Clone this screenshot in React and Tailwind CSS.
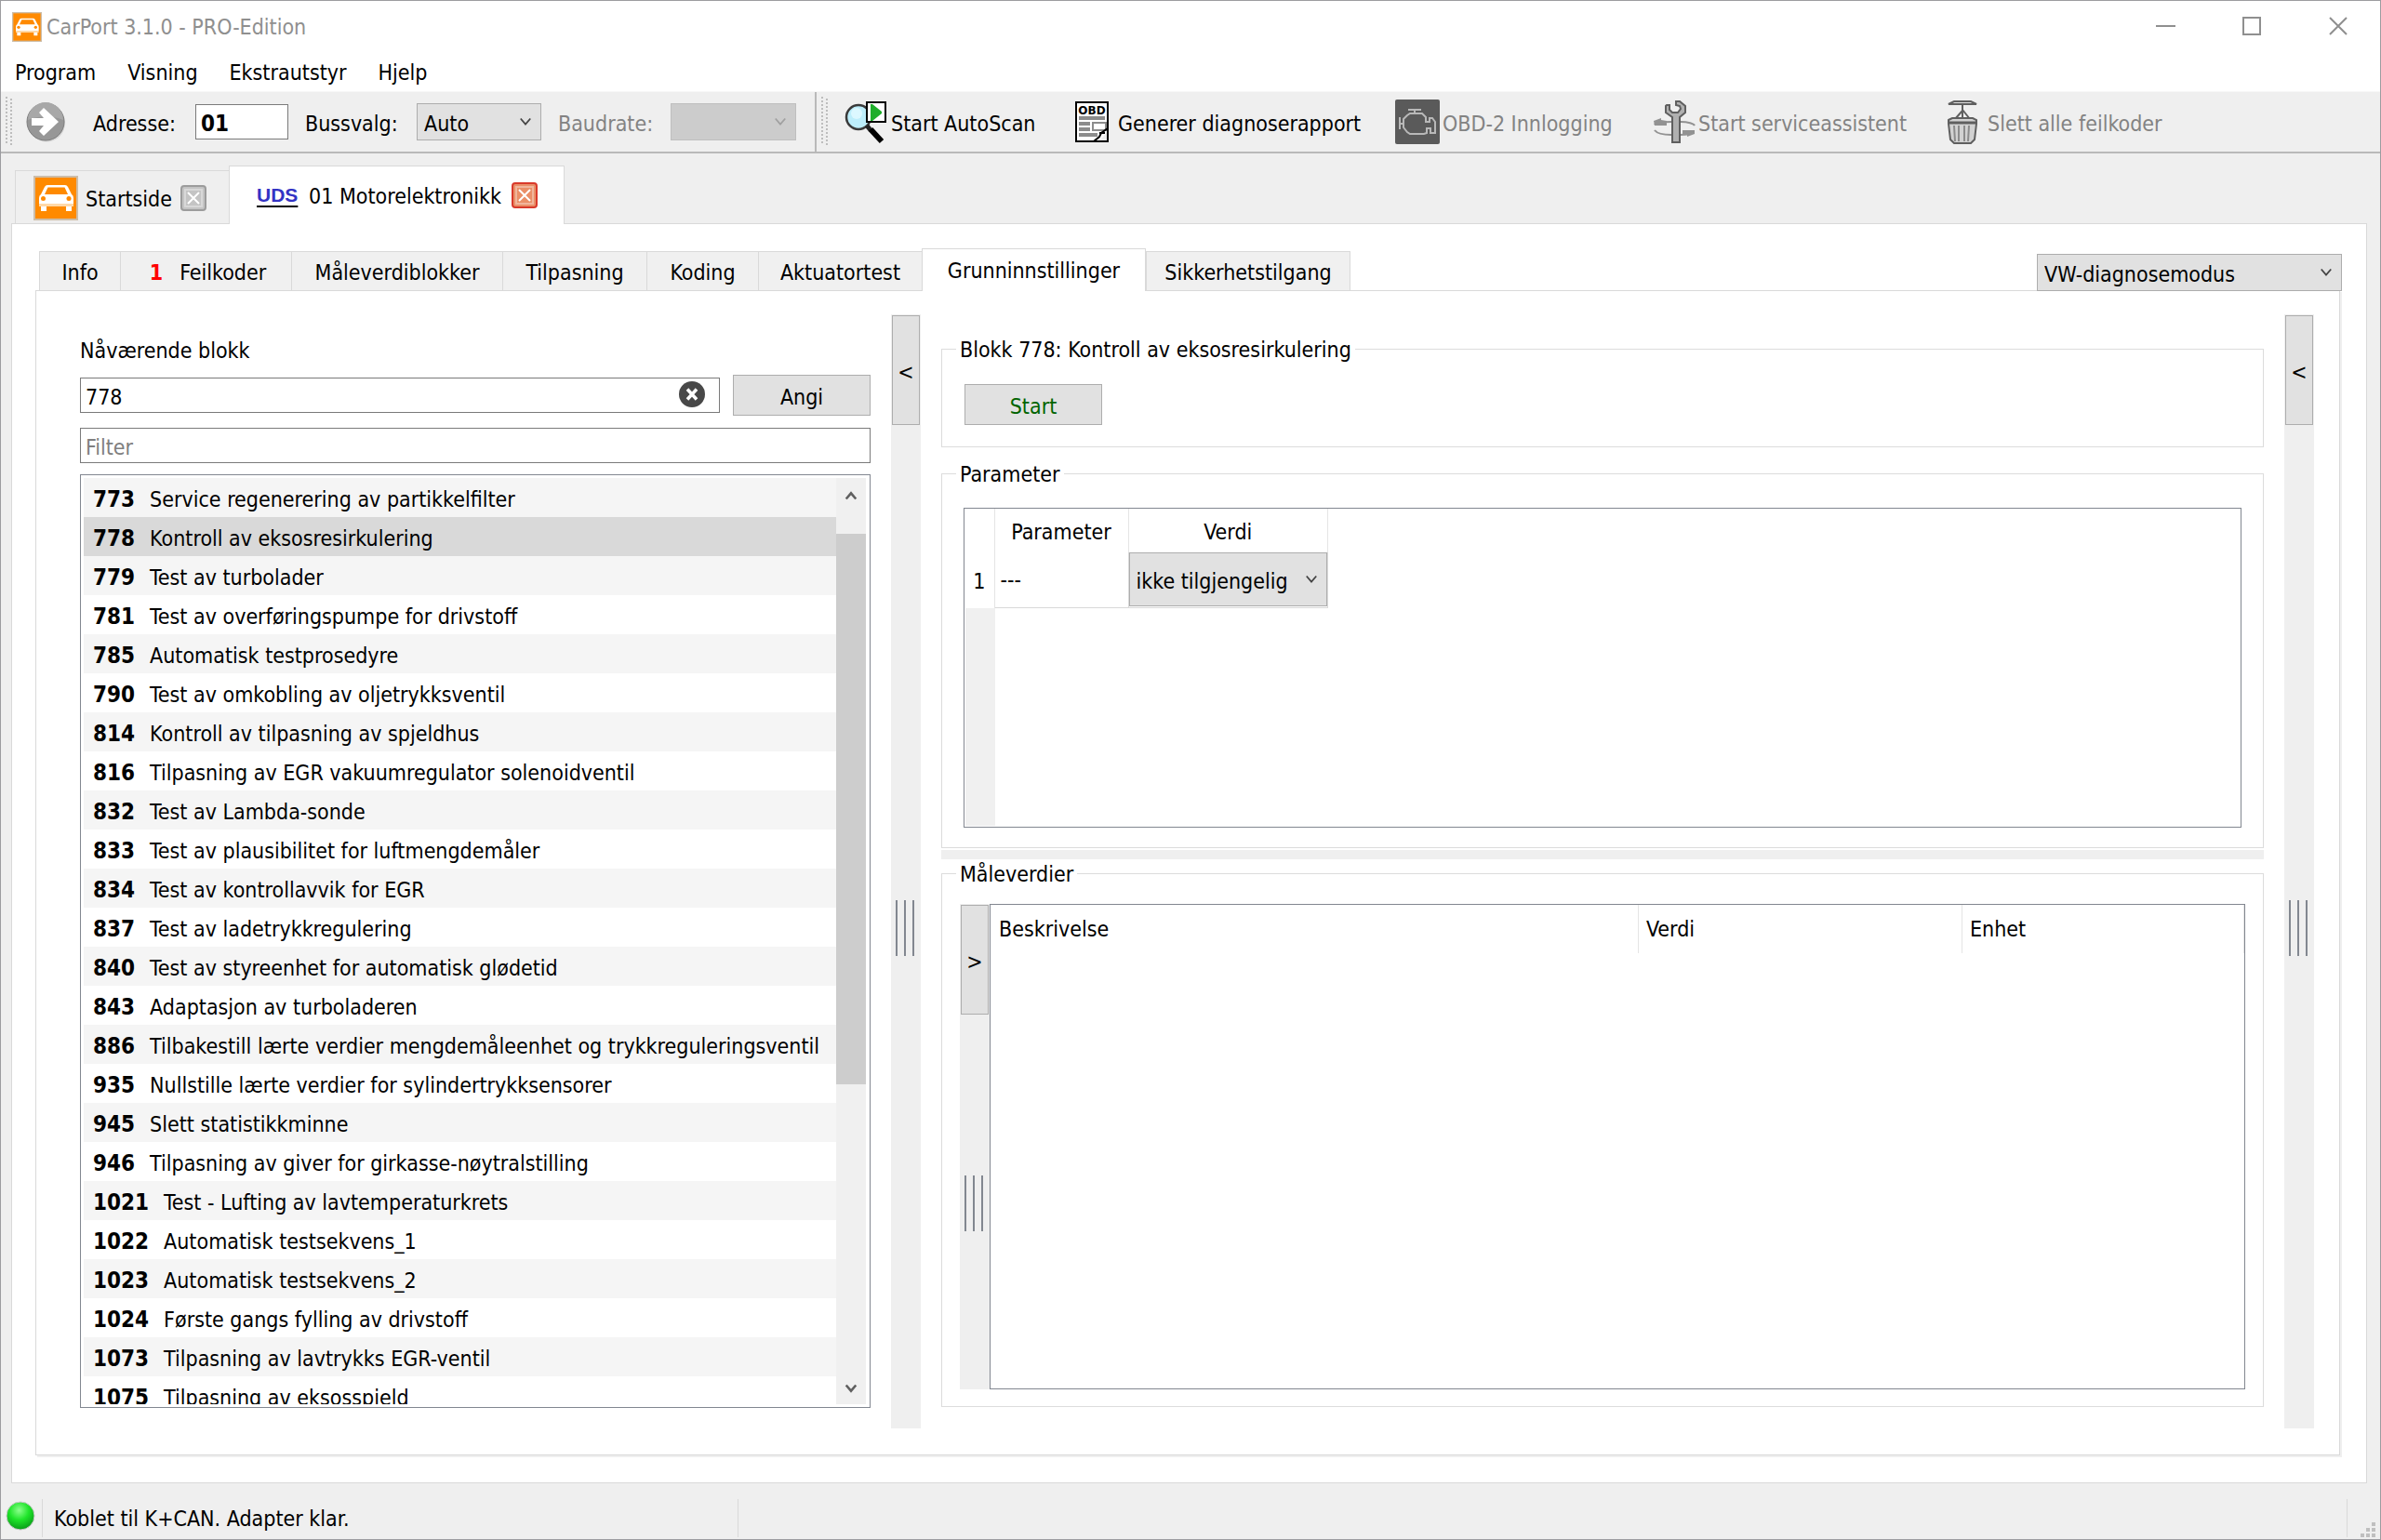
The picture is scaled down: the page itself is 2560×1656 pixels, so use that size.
import { useState } from 'react'

const BLOCKS = [
  ['773', 'Service regenerering av partikkelfilter'],
  ['778', 'Kontroll av eksosresirkulering'],
  ['779', 'Test av turbolader'],
  ['781', 'Test av overføringspumpe for drivstoff'],
  ['785', 'Automatisk testprosedyre'],
  ['790', 'Test av omkobling av oljetrykksventil'],
  ['814', 'Kontroll av tilpasning av spjeldhus'],
  ['816', 'Tilpasning av EGR vakuumregulator solenoidventil'],
  ['832', 'Test av Lambda-sonde'],
  ['833', 'Test av plausibilitet for luftmengdemåler'],
  ['834', 'Test av kontrollavvik for EGR'],
  ['837', 'Test av ladetrykkregulering'],
  ['840', 'Test av styreenhet for automatisk glødetid'],
  ['843', 'Adaptasjon av turboladeren'],
  ['886', 'Tilbakestill lærte verdier mengdemåleenhet og trykkreguleringsventil'],
  ['935', 'Nullstille lærte verdier for sylindertrykksensorer'],
  ['945', 'Slett statistikkminne'],
  ['946', 'Tilpasning av giver for girkasse-nøytralstilling'],
  ['1021', 'Test - Lufting av lavtemperaturkrets'],
  ['1022', 'Automatisk testsekvens_1'],
  ['1023', 'Automatisk testsekvens_2'],
  ['1024', 'Første gangs fylling av drivstoff'],
  ['1073', 'Tilpasning av lavtrykks EGR-ventil'],
  ['1075', 'Tilpasning av eksosspjeld'],
]

const TABS = [
  { name: 'Info', width: 'w-[87px]' },
  { name: 'Feilkoder', width: 'w-[184px]', count: 1 },
  { name: 'Måleverdiblokker', width: 'w-[227px]' },
  { name: 'Tilpasning', width: 'w-[155px]' },
  { name: 'Koding', width: 'w-[120px]' },
  { name: 'Aktuatortest', width: 'w-[176px]' },
  { name: 'Grunninnstillinger', width: 'w-[241px]' },
  { name: 'Sikkerhetstilgang', width: 'w-[220px]' },
]

export default function App() {
  const [tab, setTab] = useState('Grunninnstillinger')
  const [block, setBlock] = useState('778')
  const [filter, setFilter] = useState('')

  return (
    <div className="flex h-screen flex-col overflow-hidden border border-[#9c9ca0] bg-[#efefef] font-['DejaVu_Sans_Condensed','DejaVu_Sans',sans-serif] text-[23px] leading-[28px] text-black">
      <TitleBar />
      <Toolbar />

      <main className="flex min-h-0 flex-1 flex-col pt-[13px] pr-[14px] pl-[11px]">
        <div className="z-10 -mb-px flex items-end pl-1">
          <div className="flex h-[58px] w-[230px] items-center border-t border-l border-[#d9d9d9] pl-[19px]">
            <CarIcon className="size-12" />
            <button type="button" className="ml-2 w-[102px] pt-[2px] text-left whitespace-nowrap">Startside</button>
            <CloseTab className="border-[#9c9c9c] bg-[#c4c4c4]" label="Lukk Startside" />
          </div>
          <div className="flex h-[63px] w-[361px] items-center border border-b-0 border-[#d9d9d9] bg-white pl-[29px]">
            <span className="w-14 font-['Liberation_Sans',sans-serif] text-[21px] font-bold text-[#3333c4] underline decoration-black decoration-2 underline-offset-4">UDS</span>
            <button type="button" className="w-[218px] pt-[2px] text-left whitespace-nowrap">01 Motorelektronikk</button>
            <CloseTab className="border-[#d93a2b] bg-[#ea8f68]" label="Lukk 01 Motorelektronikk" />
          </div>
        </div>

        <div className="flex min-h-0 flex-1 flex-col border border-[#d9d9d9] bg-white pt-[26px] pr-[26px] pb-[29px] pl-[25px]">
          <div className="z-10 -mb-px flex items-end justify-between pl-1">
            <nav className="flex items-end">
              {TABS.map((t) => (
                <button
                  key={t.name}
                  type="button"
                  onClick={() => setTab(t.name)}
                  className={`flex items-center justify-center border-[#d9d9d9] whitespace-nowrap ${t.width} ${
                    t.name === tab ? 'h-[46px] border border-b-0 bg-white' : 'h-[43px] border-y border-l bg-[#f0f0f0] pt-[3px] last:border-r'
                  }`}
                >
                  {t.count ? <span className="mr-[18px] ml-1 font-bold text-[#ff0000]">{t.count}</span> : null}
                  {t.name}
                </button>
              ))}
            </nav>
            <Dropdown label="Diagnosemodus" value="VW-diagnosemodus" className="h-10 w-[328px] border-[#adadad] bg-[#e1e1e1]" />
          </div>

          <div className="mr-[2px] flex min-h-0 flex-1 border border-[#d9d9d9] pt-[25px] pr-[27px] pb-7 pl-[47px] shadow-[2px_2px_0_#efefef]">
            <section className="flex min-h-0 w-[850px] shrink-0 flex-col pt-[25px] pb-[22px]">
              <label htmlFor="block">Nåværende blokk</label>
              <div className="mt-3 flex items-center justify-between">
                <div className="relative w-[688px]">
                  <input
                    id="block"
                    value={block}
                    onChange={(e) => setBlock(e.target.value)}
                    className="block h-[38px] w-full border border-[#7a7a7a] bg-white pt-1 pl-[5px] outline-none"
                  />
                  <button type="button" aria-label="Tøm" onClick={() => setBlock('')} className="absolute top-1 right-4">
                    <svg viewBox="0 0 28 28" className="size-7">
                      <circle cx="14" cy="14" r="14" fill="#484848" />
                      <path d="M9 8.500l10 11M19 8.500l-10 11" stroke="#fff" strokeWidth="3.500" />
                    </svg>
                  </button>
                </div>
                <button type="button" className="h-11 w-[148px] border border-[#adadad] bg-[#e1e1e1] pt-1">Angi</button>
              </div>
              <input
                aria-label="Filter"
                placeholder="Filter"
                value={filter}
                onChange={(e) => setFilter(e.target.value)}
                className="mt-[13px] block h-[38px] w-full border border-[#7a7a7a] bg-white pt-1 pl-[5px] outline-none placeholder:text-[#7f7f7f]"
              />
              <div className="mt-3 flex min-h-0 flex-1 border border-[#828790] py-[3px] pr-1 pl-[3px]">
                <ul className="min-h-0 flex-1 overflow-hidden">
                  {BLOCKS.filter(([, name]) => name.toLowerCase().includes(filter.toLowerCase())).map(([id, name]) => (
                    <li key={id} className={id === block ? 'bg-[#d9d9d9]' : 'odd:bg-[#f5f5f5]'}>
                      <button type="button" onClick={() => setBlock(id)} className="flex h-[42px] w-full items-center gap-4 pt-[3px] pl-[10px] whitespace-nowrap">
                        <b className="text-[24px]">{id}</b>
                        {name}
                      </button>
                    </li>
                  ))}
                </ul>
                <div className="flex w-8 flex-col bg-[#f0f0f0]">
                  <Chevron className="mx-auto mt-3 size-[14px] rotate-180" width={3} />
                  <div className="mt-[34px] h-[592px] bg-[#cdcdcd]" />
                  <Chevron className="mx-auto mt-auto mb-[10px] size-[14px]" width={3} />
                </div>
              </div>
            </section>

            <Splitter sign="<" className="ml-[22px]" grip="top-[630px]" />

            <section className="ml-[22px] flex min-h-0 min-w-0 flex-1 flex-col pt-[22px] pb-[23px]">
              <GroupBox title="Blokk 778: Kontroll av eksosresirkulering" className="h-[121px] shrink-0">
                <button type="button" className="mt-[23px] ml-6 block h-11 w-[148px] border border-[#adadad] bg-[#e1e1e1] pt-[3px] text-[#006400]">
                  Start
                </button>
              </GroupBox>

              <GroupBox title="Parameter" className="mt-[13px] h-[418px] shrink-0">
                <div className="mt-[22px] mr-[23px] ml-[23px] flex h-[344px] flex-col border border-[#828790]">
                  <table className="w-[391px] table-fixed border-collapse">
                    <thead>
                      <tr className="h-[47px]">
                        <td className="w-8 border-r border-[#e5e5e5]" />
                        <th className="w-36 border-r border-[#e5e5e5] pt-[3px] font-normal">Parameter</th>
                        <th className="border-r border-[#e5e5e5] pt-[3px] font-normal">Verdi</th>
                      </tr>
                    </thead>
                    <tbody>
                      <tr className="h-[59px]">
                        <th className="border-r border-[#e5e5e5] pt-[3px] font-normal">1</th>
                        <td className="border-r border-b border-[#d9d9d9] pl-[6px]">---</td>
                        <td className="border-r border-b border-[#d9d9d9] p-0">
                          <Dropdown label="Verdi" value="ikke tilgjengelig" className="h-[58px] w-full border-[#adadad] bg-[#e1e1e1]" />
                        </td>
                      </tr>
                    </tbody>
                  </table>
                  <div className="mb-px ml-px w-8 flex-1 bg-[#f0f0f0]" />
                </div>
              </GroupBox>

              <div className="mt-[2px] h-[10px] shrink-0 bg-[#efefef]" />

              <GroupBox title="Måleverdier" className="flex min-h-0 flex-1 flex-col">
                <div className="mt-[18px] mr-[19px] mb-[18px] ml-[19px] flex min-h-0 flex-1">
                  <Splitter sign=">" grip="top-[292px]" />
                  <div className="min-w-0 flex-1 border border-[#828790]">
                    <table className="w-full table-fixed">
                      <thead>
                        <tr className="h-[52px]">
                          <th className="border-r border-[#e5e5e5] pl-[9px] text-left font-normal">Beskrivelse</th>
                          <th className="w-[348px] border-r border-[#e5e5e5] pl-2 text-left font-normal">Verdi</th>
                          <th className="w-[303px] border-r border-[#e5e5e5] pl-2 text-left font-normal">Enhet</th>
                        </tr>
                      </thead>
                    </table>
                  </div>
                </div>
              </GroupBox>
            </section>

            <Splitter sign="<" className="ml-[22px]" grip="top-[630px]" />
          </div>
        </div>
      </main>

      <footer className="flex h-[60px] shrink-0 items-end pb-[2px] pl-[5px]">
        <div className="flex h-[41px] w-10 items-start border-r border-[#d9d9d9] pt-[2px]">
          <StatusLight />
        </div>
        <div className="flex h-[41px] w-[748px] items-center border-r border-[#d9d9d9] pt-px pl-3">Koblet til K+CAN. Adapter klar.</div>
        <div className="h-[41px] flex-1 border-r border-[#d9d9d9]" />
        <div className="w-[35px]">
          <svg viewBox="0 0 16 16" className="mr-[5px] ml-auto size-4 fill-[#bfbfbf]">
            <path d="M12 0h4v4h-4zM6 6h4v4H6zM12 6h4v4h-4zM0 12h4v4H0zM6 12h4v4H6zM12 12h4v4h-4z" />
          </svg>
        </div>
      </footer>
    </div>
  )
}

function TitleBar() {
  return (
    <header className="shrink-0 bg-white">
      <div className="flex h-[55px] items-center pl-3 text-[#8f8f8f]">
        <CarIcon className="size-8" />
        <h1 className="ml-[5px] flex-1 pt-px">CarPort 3.1.0 - PRO-Edition</h1>
        <div className="flex pr-[34px] pb-[2px]">
          <button type="button" aria-label="Minimer">
            <svg viewBox="0 0 22 22" className="size-[22px]"><path d="M0 11h21" stroke="currentColor" strokeWidth="2" /></svg>
          </button>
          <button type="button" aria-label="Maksimer" className="ml-[70px]">
            <svg viewBox="0 0 22 22" className="size-[22px]"><path d="M2 2h18v18H2z" fill="none" stroke="currentColor" strokeWidth="2" /></svg>
          </button>
          <button type="button" aria-label="Lukk" className="ml-[71px]">
            <svg viewBox="0 0 22 22" className="size-[22px]"><path d="M2 2l18 18M20 2L2 20" stroke="currentColor" strokeWidth="2" /></svg>
          </button>
        </div>
      </div>
      <nav className="flex h-[42px] items-center gap-[34px] pt-[2px] pl-[15px]">
        <button type="button">Program</button>
        <button type="button">Visning</button>
        <button type="button">Ekstrautstyr</button>
        <button type="button">Hjelp</button>
      </nav>
    </header>
  )
}

function Toolbar() {
  return (
    <div className="flex h-[67px] shrink-0 items-center border-t border-b-2 border-t-[#f7f7f7] border-b-[#b9b9b9] whitespace-nowrap">
      <Handle />
      <button type="button" aria-label="Åpne" className="ml-[13px]">
        <svg viewBox="0 0 44 44" className="size-11">
          <circle cx="23" cy="23.500" r="20" fill="#d5d5d5" />
          <circle cx="22" cy="22" r="20" fill="#979797" stroke="#7d7d7d" />
          <path d="M3 20a19 19 0 0 1 38 0c-12-5-26-5-38 0z" fill="#a8a8a8" />
          <path d="M7 18h13l-5-6 5-5 16 15-16 15-5-5 5-6H7z" fill="#fff" />
        </svg>
      </button>
      <label htmlFor="address" className="ml-[29px] w-[110px] pt-1">Adresse:</label>
      <input id="address" defaultValue="01" className="h-[38px] w-[100px] border border-[#7a7a7a] bg-white pt-1 pl-[5px] text-[24px] font-bold outline-none" />
      <span className="ml-[18px] w-[120px] pt-1">Bussvalg:</span>
      <Dropdown label="Bussvalg" value="Auto" className="h-10 w-[134px] border-[#adadad] bg-[#e1e1e1]" />
      <span className="ml-[18px] w-[121px] pt-1 text-[#838383]">Baudrate:</span>
      <Dropdown label="Baudrate" value="" disabled className="h-10 w-[135px] border-[#bfbfbf] bg-[#cccccc] text-[#a0a0a0]" />
      <div className="ml-5 h-full w-[2px] bg-[#b9b9b9]" />
      <Handle />
      <ToolButton icon={<ScanIcon />} className="ml-[17px] w-[248px] gap-[2px]">Start AutoScan</ToolButton>
      <ToolButton icon={<ReportIcon />} className="w-[344px] gap-[10px]">Generer diagnoserapport</ToolButton>
      <ToolButton icon={<EngineIcon />} disabled className="w-[278px] gap-[3px]">OBD-2 Innlogging</ToolButton>
      <ToolButton icon={<WrenchIcon />} disabled className="w-[315px] gap-[2px]">Start serviceassistent</ToolButton>
      <ToolButton icon={<TrashIcon />} disabled className="gap-[10px]">Slett alle feilkoder</ToolButton>
    </div>
  )
}

function ToolButton({ icon, className, disabled, children }) {
  return (
    <button type="button" disabled={disabled} className={`flex shrink-0 items-center text-left disabled:text-[#838383] ${className}`}>
      {icon}
      <span className="pt-1">{children}</span>
    </button>
  )
}

function Handle() {
  return (
    <svg viewBox="0 0 8 54" className="ml-[5px] h-[54px] w-2 shrink-0">
      {Array.from({ length: 13 }, (_, i) => (
        <g key={i} fill="#bdbdbd">
          <rect x="0" y={i * 4} width="2" height="2" />
          <rect x="5" y={i * 4 + 2} width="2" height="2" />
        </g>
      ))}
    </svg>
  )
}

function Dropdown({ label, value, className, disabled }) {
  return (
    <div className="relative">
      <select aria-label={label} disabled={disabled} className={`block appearance-none border pt-[3px] pl-[7px] outline-none ${className}`}>
        <option>{value}</option>
      </select>
      <Chevron className={`pointer-events-none absolute inset-y-0 right-[10px] my-auto size-[14px] ${disabled ? 'text-[#a0a0a0]' : 'text-[#444444]'}`} />
    </div>
  )
}

function Chevron({ className, width = 2 }) {
  return (
    <svg viewBox="0 0 16 16" className={className}>
      <path d="M2 4l6 7 6-7" fill="none" stroke={width === 3 ? '#606060' : 'currentColor'} strokeWidth={width} />
    </svg>
  )
}

function CloseTab({ className, label }) {
  return (
    <button type="button" aria-label={label} className={`flex size-7 items-center justify-center rounded-sm border-2 ${className}`}>
      <svg viewBox="0 0 20 20" className="size-5">
        <path d="M1 1h18v18H1z" fill="none" stroke="#fff" strokeOpacity=".35" strokeWidth="2" />
        <path d="M4 4l12 12M16 4L4 16" stroke="#fff" strokeWidth="2" />
      </svg>
    </button>
  )
}

function Splitter({ sign, className = '', grip }) {
  return (
    <div className={`relative w-8 shrink-0 bg-[#efefef] p-px ${className}`}>
      <button type="button" className="block h-[118px] w-[30px] border border-[#adadad] bg-[#e1e1e1] pt-1">{sign}</button>
      <div className={`absolute left-[5px] h-[60px] w-5 border-x-2 border-[#828790] ${grip}`}>
        <div className="mx-auto h-full w-[2px] bg-[#828790]" />
      </div>
    </div>
  )
}

function GroupBox({ title, className, children }) {
  return (
    <fieldset className={`min-w-0 border border-[#dcdcdc] ${className}`}>
      <legend className="ml-[15px] px-1 pt-[2px]">{title}</legend>
      {children}
    </fieldset>
  )
}

function CarIcon({ className }) {
  return (
    <svg viewBox="0 0 48 48" className={className}>
      <path d="M0 0h48v48H0z" fill="#cdbda8" />
      <path d="M2 2h44v44H2z" fill="#ff8a00" />
      <path d="M15 10h19q2 0 3 2l4 8q2 1 2 4v6H6v-6q0-3 2-4l4-8q1-2 3-2z" fill="#fff" />
      <path d="M15.500 12.500h18l3.500 7.500h-25z" fill="#ff8a00" />
      <path d="M6 30h37v3H6z" fill="#ffd9a8" />
      <path d="M8 33h6v5H8zM35 33h6v5h-6z" fill="#fff" />
      <circle cx="10.500" cy="24.500" r="2.500" fill="#ff8a00" />
      <circle cx="38" cy="24.500" r="2.500" fill="#ff8a00" />
    </svg>
  )
}

function ScanIcon() {
  return (
    <svg viewBox="0 0 48 48" className="size-12 shrink-0">
      <circle cx="15" cy="19" r="13" fill="#bdeefb" stroke="#3a3a3a" strokeWidth="2.500" />
      <circle cx="13" cy="15" r="6" fill="#dcf8ff" />
      <path d="M24 28l4 5" stroke="#222" strokeWidth="5" />
      <path d="M28 32l12 13" stroke="#000" strokeWidth="6" />
      <path d="M24 3h20v21H24z" fill="#fff" stroke="#000" strokeWidth="2" />
      <path d="M28 5h2l10 8v2l-10 8h-2z" fill="#1fae2b" />
    </svg>
  )
}

function ReportIcon() {
  return (
    <svg viewBox="0 0 36 44" className="h-11 w-9 shrink-0">
      <path d="M1 1h34v31L26 43H1z" fill="#fff" />
      <path d="M1 1h34v42H1z" fill="none" stroke="#000" strokeWidth="2" />
      <text x="18" y="14" textAnchor="middle" fontFamily="DejaVu Sans" fontSize="12" fontWeight="bold">OBD</text>
      <path d="M4 16h28v4H4zM4 22h12v4H4zM4 28h12v4H4zM4 34h20v4H4z" fill="#8c8c8c" />
      <path d="M19 23h14v8H19z" fill="#fff" stroke="#8c8c8c" strokeWidth="2" />
      <path d="M35 29l-7 5-2 4-6 5M26 34h6" fill="none" stroke="#000" strokeWidth="2" />
    </svg>
  )
}

function EngineIcon() {
  return (
    <svg viewBox="0 0 48 48" className="size-12 shrink-0">
      <rect width="48" height="48" rx="2" fill="#5a5a5a" />
      <g fill="none" stroke="#b8b8b8" strokeWidth="2">
        <path d="M14 11h14M21 11v4M16 15h13l4 4v5h4v-4h3l3 4v12h-5v-5h-4v5l-3 1H16l-3-2-4-5v-9l4-4z" />
        <path d="M5 19v13M5 26h4" />
      </g>
    </svg>
  )
}

function WrenchIcon() {
  return (
    <svg viewBox="0 0 46 46" className="size-[46px] shrink-0">
      <path d="M19 23c-9 0-17 1-18 3M29 23c8 0 14 2 15 4M1 32c3 4 10 5 18 5M28 37c8 0 13-1 15-3" fill="none" stroke="#929292" strokeWidth="2" />
      <path d="M0 22l8-3v2l6 1v5H1zM31 32h13v4l-8 3v-2h-5z" fill="#929292" />
      <path d="M14 5l3 0v5l3 3h6l3-4-1-3-4-1V1h4l6 5v7l-6 5v27h-8V18l-7-5V6z" fill="#b0b0b0" stroke="#5f5f5f" strokeWidth="2" />
    </svg>
  )
}

function TrashIcon() {
  return (
    <svg viewBox="0 0 34 48" className="h-12 w-[34px] shrink-0">
      <path d="M8 2h18l6 3H2z" fill="#ddd" stroke="#5f5f5f" strokeWidth="2" />
      <path d="M17 6v6l-8 9M17 11l8 10M17 11v10" fill="none" stroke="#5f5f5f" strokeWidth="2" />
      <path d="M2 22l4-2h22l4 2v4l-2 17-4 4H8l-4-4L2 26z" fill="#d2d2d2" stroke="#5f5f5f" strokeWidth="2" />
      <path d="M3 25h28" stroke="#5f5f5f" strokeWidth="3" />
      <path d="M8 28l1 17M13 28v17M19 28v17M24 28l-1 17" stroke="#8c8c8c" strokeWidth="2" />
    </svg>
  )
}

function StatusLight() {
  return (
    <svg viewBox="0 0 32 32" className="size-8">
      <defs>
        <radialGradient id="light" cx="45%" cy="30%" r="70%">
          <stop offset="0" stopColor="#8dff8d" />
          <stop offset=".5" stopColor="#1fe52a" />
          <stop offset="1" stopColor="#0a9c18" />
        </radialGradient>
      </defs>
      <circle cx="16" cy="16" r="15" fill="url(#light)" stroke="#c9c9c9" />
    </svg>
  )
}
